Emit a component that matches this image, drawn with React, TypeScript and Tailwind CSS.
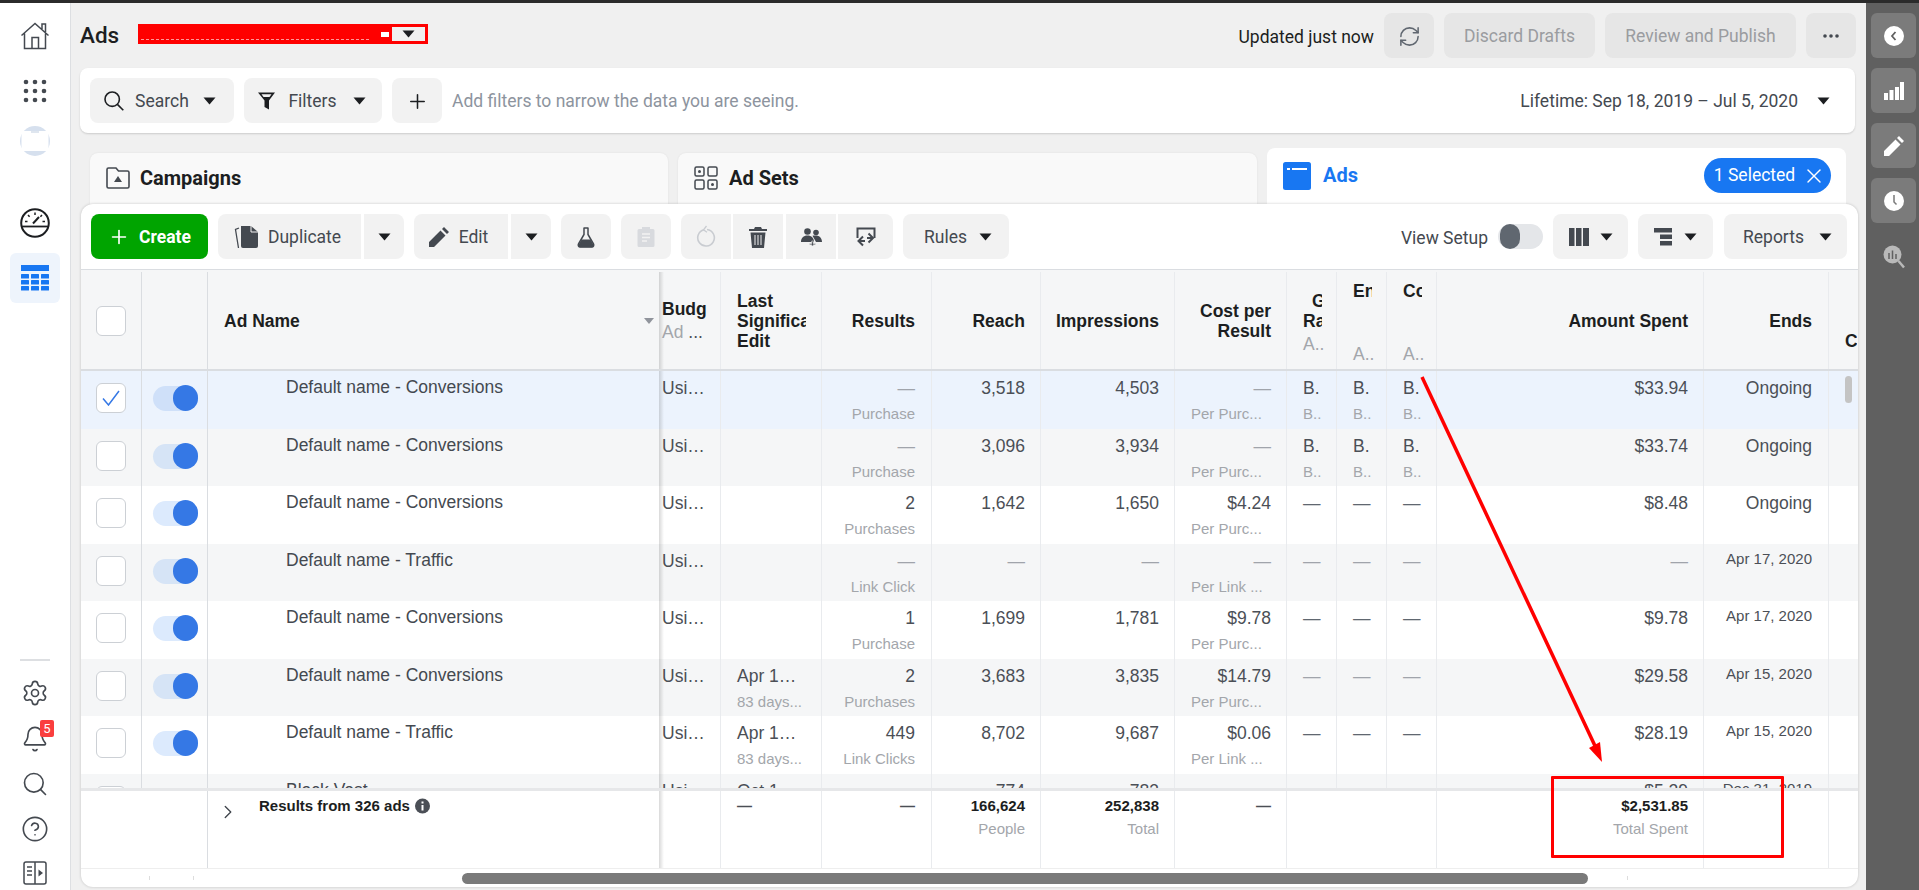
import { ReactNode } from "react";
import { Search, Plus, Settings, Bell, CircleHelp, X, RefreshCw, ChevronRight } from "lucide-react";

const Caret = ({ className = "" }: { className?: string }) => (
  <svg width="13" height="8" viewBox="0 0 13 8" className={className}>
    <path d="M0.5 0.5h12L6.5 7.5z" fill="#1c1e21" />
  </svg>
);

const HomeIcon = () => (
  <svg width="30" height="30" viewBox="0 0 30 30" fill="none" stroke="#444950" strokeWidth="1.5">
    <path d="M1.5 14.5 15 2.5l13.5 12M4.5 12.5V27.5h21V12.5M22 8V3h3.5v8M12 27.5v-11h6.5v11" />
  </svg>
);

const DotsIcon = () => (
  <svg width="24" height="24" viewBox="0 0 24 24" fill="#444950">
    {[3, 12, 21].map((y) =>
      [3, 12, 21].map((x) => <circle key={`${x}-${y}`} cx={x} cy={y} r="2.3" />)
    )}
  </svg>
);

const AccountIcon = () => (
  <svg width="30" height="30" viewBox="0 0 30 30">
    <circle cx="15" cy="15" r="15" fill="#d6e0ee" />
    <rect x="1.5" y="5" width="27" height="20" rx="2" fill="#ffffff" />
    <rect x="11" y="5" width="8" height="2" fill="#dfe6ef" />
  </svg>
);

const GaugeIcon = () => (
  <svg width="30" height="30" viewBox="0 0 30 30" fill="none" stroke="#1c1e21">
    <circle cx="15" cy="15" r="13.8" strokeWidth="2" />
    <path d="M2 18.5h26" strokeWidth="1.8" />
    <path d="M13 15.5 19 9" strokeWidth="2" />
    <path d="M15 4.5v2.5M8 7l1.6 1.8M22 7l-1.6 1.8M5 13.5h2.5M25 13.5h-2.5" strokeWidth="1.5" />
  </svg>
);

const TableIcon = () => (
  <svg width="28" height="26" viewBox="0 0 28 26" fill="#1877f2">
    <rect x="0" y="0" width="28" height="6" />
    {[9, 15, 21].map((y) =>
      [0, 10, 20].map((x) => <rect key={`${x}-${y}`} x={x} y={y} width="8" height="4.5" rx="0.5" />)
    )}
  </svg>
);

const PanelIcon = () => (
  <svg width="24" height="24" viewBox="0 0 24 24" fill="none" stroke="#444950" strokeWidth="1.5">
    <rect x="1" y="1" width="22" height="22" rx="2" />
    <path d="M12 1v22M4 6h5M4 10h5M4 14h5" />
    <path d="M15.5 8.5 20 12l-4.5 3.5z" fill="#444950" stroke="none" />
  </svg>
);

const SearchGlass = () => (
  <svg width="20" height="20" viewBox="0 0 20 20" fill="none" stroke="#1c1e21" strokeWidth="1.6">
    <circle cx="8.200" cy="8.200" r="7.200" />
    <path d="M13.400 13.400 19.300 19.300" />
  </svg>
);

const FunnelIcon = () => (
  <svg width="17" height="18" viewBox="0 0 17 18">
    <path d="M0 0.500h17L11 8.500V17.500l-4.500-2.500V8.500z" fill="#1c1e21" />
    <path d="M3.500 2.200h10L11.500 5H5.500z" fill="#f2f2f2" />
  </svg>
);

const DuplicateIcon = () => (
  <svg width="25" height="24" viewBox="0 0 25 24" fill="none">
    <path d="M5 3 1.5 4.5 4.5 23" stroke="#444950" strokeWidth="1.3" />
    <path d="M7 1h10l7 6v14a2 2 0 0 1-2 2H9a2 2 0 0 1-2-2z" fill="#444950" />
    <path d="M17 1v6h7" fill="none" stroke="#f2f2f2" strokeWidth="1" />
  </svg>
);

const PencilIcon = ({ color = "#444950" }: { color?: string }) => (
  <svg width="20" height="20" viewBox="0 0 20 20" fill={color}>
    <path d="M0 20v-5L11.5 3.5l5 5L5 20zM13 2l2-2 5 5-2 2z" />
  </svg>
);

const FlaskIcon = () => (
  <svg width="18" height="21" viewBox="0 0 18 21" fill="none">
    <path d="M6.5 1h5M7 1v6.5L1.5 17a2 2 0 0 0 1.8 3h11.4a2 2 0 0 0 1.8-3L11 7.5V1" stroke="#444950" strokeWidth="1.5" />
    <path d="M4.500 12.500h9l3 5.500a1.500 1.500 0 0 1-1.300 2.200H2.800A1.500 1.500 0 0 1 1.500 18z" fill="#444950" />
  </svg>
);

const ClipboardIcon = () => (
  <svg width="18" height="22" viewBox="0 0 18 22" fill="#d8dade">
    <path d="M2 3h3V1h8v2h3a1.500 1.500 0 0 1 1.500 1.500v15A1.500 1.500 0 0 1 16 21H2a1.500 1.500 0 0 1-1.500-1.500v-15A1.500 1.500 0 0 1 2 3z" />
    <path d="M5 8h8M5 11.500h8M5 15h5" stroke="#f2f2f2" strokeWidth="1.300" />
  </svg>
);

const RedoIcon = () => (
  <svg width="20" height="24" viewBox="0 0 20 24" fill="none" stroke="#c9ccd1" strokeWidth="1.600">
    <path d="M11 4.500a8.300 8.300 0 1 1-3 .2" />
    <path d="M10.500 1 7.500 4.800l3.500 2.400" strokeWidth="1.300" />
  </svg>
);

const TrashIcon = () => (
  <svg width="18" height="21" viewBox="0 0 18 21" fill="#444950">
    <path d="M6 0h6l1 2h5v2H0V2h5zM1.500 5.500h15L15 21H3z" />
    <path d="M6 8v10M9 8v10M12 8v10" stroke="#f2f2f2" strokeWidth="1" />
  </svg>
);

const PeopleIcon = () => (
  <svg width="21" height="18" viewBox="0 0 21 18" fill="#444950">
    <circle cx="6.500" cy="3.500" r="3.300" />
    <circle cx="15" cy="4.500" r="2.800" />
    <path d="M0 14c0-4 2.500-6.500 6.500-6.500S13 10 13 14zM11.500 7.800C13 7.300 17 7 19 9c1.500 1.500 2 3.500 2 5h-6z" />
    <path d="M8.500 15.500h2.200v-2.500h1.600v2.500h2.200v1.300h-2.200V18h-1.600v-1.200H8.500z" stroke="#f2f2f2" strokeWidth="0.600" />
  </svg>
);

const ShareIcon = () => (
  <svg width="20" height="20" viewBox="0 0 20 20" fill="none" stroke="#444950" strokeWidth="2">
    <path d="M1.500 11V1.500h17V11" />
    <path d="M7 9.500 2.500 14 7 18.500M3 14h6M12.500 6.500 17 11l-4.500 4.500M11 11h5.500" />
  </svg>
);

const ColumnsIcon = () => (
  <svg width="20" height="20" viewBox="0 0 20 20" fill="#444950">
    <rect x="0" y="1" width="5.500" height="18" />
    <rect x="7" y="1" width="5.500" height="18" />
    <rect x="14" y="1" width="6" height="18" />
  </svg>
);

const BreakdownIcon = () => (
  <svg width="18" height="18" viewBox="0 0 18 18" fill="#444950">
    <rect x="0" y="0" width="18" height="4.500" />
    <rect x="6" y="6.500" width="12" height="4.500" />
    <rect x="6" y="13" width="12" height="4.500" />
  </svg>
);

const CampaignIcon = () => (
  <svg width="24" height="22" viewBox="0 0 24 22" fill="none" stroke="#444950" strokeWidth="1.600">
    <path d="M1 2.500A1.500 1.500 0 0 1 2.500 1H10l2.500 3h9A1.500 1.500 0 0 1 23 5.500v14a1.500 1.500 0 0 1-1.500 1.500h-19A1.500 1.500 0 0 1 1 19.500z" />
    <path d="M12 9l4 6H8z" fill="#444950" stroke="none" />
  </svg>
);

const AdSetIcon = () => (
  <svg width="24" height="24" viewBox="0 0 24 24" fill="none" stroke="#444950" strokeWidth="1.500">
    {[
      [1, 1],
      [14, 1],
      [1, 14],
      [14, 14],
    ].map(([x, y]) => (
      <g key={`${x}-${y}`}>
        <rect x={x} y={y} width="9" height="9" rx="1.500" />
      </g>
    ))}
    <circle cx="5.500" cy="5.500" r="1.500" fill="#444950" stroke="none" />
    <circle cx="18.500" cy="18.500" r="1.500" fill="#444950" stroke="none" />
  </svg>
);

const AdTabIcon = () => (
  <svg width="28" height="28" viewBox="0 0 28 28">
    <rect width="28" height="28" rx="2.500" fill="#1877f2" />
    <rect x="4" y="6" width="3" height="2" fill="#ffffff" />
    <rect x="9" y="6" width="15" height="2" fill="#ffffff" />
  </svg>
);

const BackIcon = () => (
  <svg width="20" height="20" viewBox="0 0 20 20">
    <circle cx="10" cy="10" r="10" fill="#ffffff" />
    <path d="M11.500 6 8 10l3.500 4" fill="none" stroke="#606060" strokeWidth="1.800" />
  </svg>
);

const BarsIcon = () => (
  <svg width="20" height="18" viewBox="0 0 20 18" fill="#ffffff">
    <rect x="0" y="11" width="4" height="7" />
    <rect x="5.500" y="8" width="4" height="10" />
    <rect x="11" y="5" width="4" height="13" />
    <rect x="16" y="0" width="4" height="18" />
  </svg>
);

const ClockIcon = () => (
  <svg width="20" height="20" viewBox="0 0 20 20">
    <circle cx="10" cy="10" r="10" fill="#ffffff" />
    <path d="M10 4v7l2.500 2.500" fill="none" stroke="#7a7a7a" strokeWidth="1.500" />
  </svg>
);

const InsightIcon = () => (
  <svg width="22" height="24" viewBox="0 0 22 24" fill="none">
    <circle cx="9.500" cy="9.500" r="9" fill="#b9b9b9" />
    <path d="M15.500 16 21 22.500" stroke="#b9b9b9" strokeWidth="2.500" />
    <path d="M6 8v6M9.500 5.500V14M13 9v5" stroke="#606060" strokeWidth="1.500" />
  </svg>
);

const Btn = ({
  className = "",
  bg = "bg-[#f2f2f2]",
  children,
}: {
  className?: string;
  bg?: string;
  children: ReactNode;
}) => (
  <div className={`flex h-[45px] shrink-0 items-center justify-center rounded-lg pt-px ${bg} ${className}`}>
    {children}
  </div>
);

const RailBtn = ({ children }: { children: ReactNode }) => (
  <div className="flex h-[45px] w-[45px] items-center justify-center rounded-md bg-[#7b7b7b]">{children}</div>
);

const Box = ({ checked = false }: { checked?: boolean }) => (
  <div className="flex h-[30px] w-[30px] items-center justify-center rounded-md border border-[#ccd0d5] bg-white">
    {checked && (
      <svg width="18" height="16" viewBox="0 0 18 16" fill="none" stroke="#3578e5" strokeWidth="1.500">
        <path d="M1 8.500 6.500 15 17 1" />
      </svg>
    )}
  </div>
);

const COLS =
  "grid grid-cols-[61px_66px_451px_62px_101px_110px_109px_134px_112px_50px_50px_50px_267px_125px_28px]";

const LINE = "border-r border-[#e9ebee]";
const FIRST = "border-r border-[#dadde1]";
const SHADOW = "bg-linear-to-r from-black/15 to-transparent bg-[length:5px_100%] bg-no-repeat";

type Row = {
  name: string;
  edit?: [string, string?];
  results: [string, string?];
  reach: string;
  impressions: string;
  cost: [string, string?];
  blocks?: boolean;
  spent: string;
  ends: string;
};

const CONV = "Default name - Conversions";
const TRAF = "Default name - Traffic";

const rows: Row[] = [
  { name: CONV, results: ["—", "Purchase"], reach: "3,518", impressions: "4,503", cost: ["—", "Per Purc..."], blocks: true, spent: "$33.94", ends: "Ongoing" },
  { name: CONV, results: ["—", "Purchase"], reach: "3,096", impressions: "3,934", cost: ["—", "Per Purc..."], blocks: true, spent: "$33.74", ends: "Ongoing" },
  { name: CONV, results: ["2", "Purchases"], reach: "1,642", impressions: "1,650", cost: ["$4.24", "Per Purc..."], spent: "$8.48", ends: "Ongoing" },
  { name: TRAF, results: ["—", "Link Click"], reach: "—", impressions: "—", cost: ["—", "Per Link ..."], spent: "—", ends: "Apr 17, 2020" },
  { name: CONV, results: ["1", "Purchase"], reach: "1,699", impressions: "1,781", cost: ["$9.78", "Per Purc..."], spent: "$9.78", ends: "Apr 17, 2020" },
  { name: CONV, edit: ["Apr 1…", "83 days..."], results: ["2", "Purchases"], reach: "3,683", impressions: "3,835", cost: ["$14.79", "Per Purc..."], spent: "$29.58", ends: "Apr 15, 2020" },
  { name: TRAF, edit: ["Apr 1…", "83 days..."], results: ["449", "Link Clicks"], reach: "8,702", impressions: "9,687", cost: ["$0.06", "Per Link ..."], spent: "$28.19", ends: "Apr 15, 2020" },
  { name: "Black Vest", edit: ["Oct 1…"], results: [""], reach: "774", impressions: "783", cost: [""], spent: "$5.29", ends: "Dec 31, 2019" },
];

const Value = ({ text, dim }: { text: string; dim: boolean }) => {
  const color = text !== "—" ? "text-[#4b4f56]" : dim ? "text-[#a0a4ab]" : "text-[#606770]";
  return <div className={`h-5 leading-5 whitespace-nowrap ${color}`}>{text}</div>;
};

const Sub = ({ text }: { text?: string }) =>
  text ? <div className="mt-[6px] h-5 text-[15px] leading-5 whitespace-nowrap text-[#a3a6ab]">{text}</div> : null;

const Short = ({ row, dim }: { row: Row; dim: boolean }) => (
  <div className={`${LINE} overflow-hidden pt-[7px] pl-4`}>
    {row.blocks ? (
      <>
        <Value text="B." dim={dim} />
        <Sub text="B.." />
      </>
    ) : (
      <Value text={row.name === "Black Vest" ? "" : "—"} dim={dim} />
    )}
  </div>
);

const DataRow = ({ row, index }: { row: Row; index: number }) => {
  const bg = index === 0 ? "bg-[#ecf3fd]" : index % 2 === 1 ? "bg-[#f5f6f7]" : "bg-white";
  const track = index === 0 ? "bg-[#cfe0f9]" : index % 2 === 1 ? "bg-[#d6e4f6]" : "bg-[#dceafd]";
  const dim = index % 2 === 1 || index === 0;
  return (
    <div className={`${COLS} h-[57.5px] shrink-0 text-[17.5px] ${bg}`}>
      <div className={`${FIRST} flex justify-center pt-3`}>
        <Box checked={index === 0} />
      </div>
      <div className={`${FIRST} pt-[15px] pl-[11px]`}>
        <div className={`relative h-[25px] w-[45px] rounded-full ${track}`}>
          <div className="absolute top-[-1px] right-0 h-[26px] w-[25px] rounded-full bg-[#3578e5]" />
        </div>
      </div>
      <div className="pt-[6px] pl-[78px] leading-5 whitespace-nowrap text-[#444950]">{row.name}</div>
      <div className={`${LINE} ${SHADOW} overflow-hidden pt-[7px] pl-[3px]`}>
        <Value text="Usi…" dim={false} />
      </div>
      <div className={`${LINE} overflow-hidden pt-[7px] pl-4`}>
        {row.edit && (
          <>
            <Value text={row.edit[0]} dim={false} />
            <Sub text={row.edit[1]} />
          </>
        )}
      </div>
      <div className={`${LINE} pt-[7px] pr-4 text-right`}>
        <Value text={row.results[0]} dim={dim} />
        <Sub text={row.results[1]} />
      </div>
      <div className={`${LINE} pt-[7px] pr-[15px] text-right`}>
        <Value text={row.reach} dim={dim} />
      </div>
      <div className={`${LINE} pt-[7px] pr-[15px] text-right`}>
        <Value text={row.impressions} dim={dim} />
      </div>
      <div className={`${LINE} pt-[7px] pr-[15px] text-right`}>
        <Value text={row.cost[0]} dim={dim} />
        {row.cost[1] && <div className="mt-[6px] h-5 pl-4 text-left text-[15px] leading-5 whitespace-nowrap text-[#a3a6ab]">{row.cost[1]}</div>}
      </div>
      <Short row={row} dim={dim} />
      <Short row={row} dim={dim} />
      <Short row={row} dim={dim} />
      <div className={`${LINE} pt-[7px] pr-[15px] text-right`}>
        <Value text={row.spent} dim={dim} />
      </div>
      <div className={`${LINE} pr-4 text-right`}>
        {row.ends === "Ongoing" ? (
          <div className="pt-[7px]">
            <Value text={row.ends} dim={false} />
          </div>
        ) : (
          <div className="pt-[5px] text-[15px] leading-5 whitespace-nowrap text-[#4b4f56]">{row.ends}</div>
        )}
      </div>
      <div />
    </div>
  );
};

const Th = ({ className = "", children }: { className?: string; children?: ReactNode }) => (
  <div className={`${LINE} flex flex-col justify-center overflow-hidden ${className}`}>{children}</div>
);

const HeaderRow = () => (
  <div className={`${COLS} h-[101px] shrink-0 border-b-2 border-[#dadde1] bg-[#f5f6f7] pt-[2px] text-[17.5px] leading-5 font-bold text-[#1c1e21]`}>
    <div className={`${FIRST} flex items-center justify-center`}>
      <Box />
    </div>
    <div className={FIRST} />
    <div className="flex items-center justify-between pr-[5px] pl-4">
      <span>Ad Name</span>
      <svg width="10" height="6" viewBox="0 0 10 6">
        <path d="M0 0h10L5 6z" fill="#90949c" />
      </svg>
    </div>
    <Th className={`${SHADOW} pl-[3px]`}>
      <div className="whitespace-nowrap">Budg</div>
      <div className="mt-[3px] font-normal whitespace-nowrap text-[#a3a6ab]">
        Ad <span className="text-[#4b4f56]">...</span>
      </div>
    </Th>
    <Th className="pr-[15px] pl-4">
      <div className="overflow-hidden whitespace-nowrap">Last</div>
      <div className="overflow-hidden whitespace-nowrap">Significant</div>
      <div className="overflow-hidden whitespace-nowrap">Edit</div>
    </Th>
    <Th className="pr-4 text-right">Results</Th>
    <Th className="pr-[15px] text-right">Reach</Th>
    <Th className="pr-[15px] text-right">Impressions</Th>
    <Th className="pr-[15px] text-right">
      <div>Cost per</div>
      <div>Result</div>
    </Th>
    <div className={`${LINE} overflow-hidden pt-[19px] pl-4`}>
      <div className="ml-[9px] w-[10px] overflow-hidden">G</div>
      <div className="w-[19px] overflow-hidden whitespace-nowrap">Ra</div>
      <div className="mt-[3px] font-normal whitespace-nowrap text-[#a3a6ab]">A..</div>
    </div>
    <div className={`${LINE} overflow-hidden pt-[9px] pl-4`}>
      <div className="w-[19px] overflow-hidden whitespace-nowrap">En</div>
      <div className="mt-[43px] font-normal whitespace-nowrap text-[#a3a6ab]">A..</div>
    </div>
    <div className={`${LINE} overflow-hidden pt-[9px] pl-4`}>
      <div className="w-[19px] overflow-hidden whitespace-nowrap">Co</div>
      <div className="mt-[43px] font-normal whitespace-nowrap text-[#a3a6ab]">A..</div>
    </div>
    <Th className="pr-[15px] text-right">Amount Spent</Th>
    <Th className="pr-4 text-right">Ends</Th>
    <div className="overflow-hidden pt-[59px] pl-[16px]">C</div>
  </div>
);

const Total = ({ value, label }: { value: string; label: string }) => (
  <div className={`${LINE} pt-[5px] pr-[15px] text-right text-[15px] leading-5`}>
    <div className="font-bold text-[#1c1e21]">{value}</div>
    <div className="mt-[3px] text-[#a3a6ab]">{label}</div>
  </div>
);

const FooterRow = () => (
  <div className={`${COLS} h-[80px] shrink-0 border-t-[3px] border-[#e6e7e9] bg-white`}>
    <div />
    <div className={FIRST} />
    <div className="flex items-start pt-[10px] pl-[9px]">
      <ChevronRight size={22} strokeWidth={1.5} color="#444950" />
      <div className="mt-[-5px] ml-[20px] flex items-center gap-[5px] text-[15px] leading-5 font-bold text-[#1c1e21]">
        Results from 326 ads
        <svg width="15" height="16" viewBox="0 0 15 16">
          <circle cx="7.500" cy="8" r="7.500" fill="#4b4f56" />
          <rect x="6.500" y="7" width="2" height="5.500" fill="#ffffff" />
          <rect x="6.500" y="3.500" width="2" height="2" fill="#ffffff" />
        </svg>
      </div>
    </div>
    <div className={`${LINE} ${SHADOW}`} />
    <div className={`${LINE} pt-[5px] pl-4 text-[15px] leading-5 font-bold text-[#4b4f56]`}>—</div>
    <div className={`${LINE} pt-[5px] pr-4 text-right text-[15px] leading-5 font-bold text-[#4b4f56]`}>—</div>
    <Total value="166,624" label="People" />
    <Total value="252,838" label="Total" />
    <div className={`${LINE} pt-[5px] pr-[15px] text-right text-[15px] leading-5 font-bold text-[#4b4f56]`}>—</div>
    <div />
    <div />
    <div className={LINE} />
    <div className={`${LINE} pt-[5px] pr-[15px] text-right text-[15px] leading-5`}>
      <div className="font-bold text-[#1c1e21]">$2,531.85</div>
      <div className="mt-[3px] text-[#a3a6ab]">Total Spent</div>
    </div>
    <div className={LINE} />
    <div />
  </div>
);

const GREY = "bg-[#e6e6e6]";

const App = () => {
  return (
    <div className="relative flex h-[890px] w-[1919px] flex-col overflow-hidden bg-[#f0f0f0] [font-family:Roboto,sans-serif] text-[17.5px] text-[#1c1e21]">
      <div className="h-[3px] shrink-0 bg-[#2b2b2b]" />
      <div className="flex min-h-0 flex-1">
        {/* left nav */}
        <aside className="flex w-[71px] shrink-0 flex-col items-center border-r border-[#dddfe2] bg-white">
          <div className="mt-[18px]">
            <HomeIcon />
          </div>
          <div className="mt-[28px]">
            <DotsIcon />
          </div>
          <div className="mt-[23px]">
            <AccountIcon />
          </div>
          <div className="mt-[52px]">
            <GaugeIcon />
          </div>
          <div className="mt-[15px] flex h-[50px] w-[50px] items-center justify-center rounded-md bg-[#eef4fc]">
            <TableIcon />
          </div>
          <div className="mt-auto h-[2px] w-[30px] bg-[#dddfe2]" />
          <div className="mt-[18px]">
            <Settings size={28} strokeWidth={1.4} color="#444950" />
          </div>
          <div className="relative mt-[18px]">
            <Bell size={28} strokeWidth={1.4} color="#444950" />
            <div className="absolute top-[-5px] right-[-5px] flex h-[17px] w-[14px] items-center justify-center rounded-[2px] bg-[#fa3e3e] text-[13px] text-white">
              5
            </div>
          </div>
          <div className="mt-[17px]">
            <Search size={28} strokeWidth={1.4} color="#444950" />
          </div>
          <div className="mt-[17px]">
            <CircleHelp size={28} strokeWidth={1.4} color="#444950" />
          </div>
          <div className="mt-[18px] mb-[5px]">
            <PanelIcon />
          </div>
        </aside>

        <main className="flex min-w-0 flex-1 flex-col">
          {/* page title */}
          <div className="flex h-[65px] shrink-0 items-start pt-[10px] pr-[10px] pl-[9px]">
            <div className="mt-[9px] text-[22.5px] leading-[26px] font-medium">Ads</div>
            <div className="mt-[11px] ml-[19px] flex h-[20px] w-[290px] items-center border-[3px] border-[#ff0000] bg-[#ff0000]">
              <div className="mb-[1px] flex-1 self-end border-b border-dashed border-white/60" />
              <div className="ml-[12px] h-[5px] w-[8px] bg-white" />
              <div className="ml-[3px] flex h-full w-[33px] items-center justify-center bg-[#f0f0f0]">
                <Caret />
              </div>
            </div>
            <div className="mt-[11px] ml-auto whitespace-nowrap">Updated just now</div>
            <Btn bg={GREY} className="ml-[10px] w-[50px]">
              <RefreshCw size={23} strokeWidth={1.6} color="#606770" />
            </Btn>
            <Btn bg={GREY} className="ml-[10px] w-[151px] text-[#9a9ca0]">
              Discard Drafts
            </Btn>
            <Btn bg={GREY} className="ml-[10px] w-[191px] text-[#9a9ca0]">
              Review and Publish
            </Btn>
            <Btn bg={GREY} className="ml-[10px] w-[50px]">
              <svg width="16" height="4" viewBox="0 0 16 4" fill="#444950">
                <circle cx="2" cy="2" r="1.800" />
                <circle cx="8" cy="2" r="1.800" />
                <circle cx="14" cy="2" r="1.800" />
              </svg>
            </Btn>
          </div>

          {/* filter bar */}
          <div className="mr-[11px] ml-[9px] flex h-[65px] shrink-0 items-center rounded-lg bg-white pr-[25px] pl-[10px] shadow-[0_1px_2px_rgba(0,0,0,0.15)]">
            <Btn className="w-[144px] pr-[4px]">
              <SearchGlass />
              <span className="ml-[11px] text-[#444950]">Search</span>
              <Caret className="ml-[14px]" />
            </Btn>
            <Btn className="ml-[10px] w-[138px] pr-[2px]">
              <FunnelIcon />
              <span className="ml-[13px] text-[#444950]">Filters</span>
              <Caret className="ml-[16px]" />
            </Btn>
            <Btn className="ml-[10px] w-[50px]">
              <Plus size={23} strokeWidth={1.6} color="#1c1e21" />
            </Btn>
            <div className="ml-[10px] pt-px whitespace-nowrap text-[#8d949e]">Add filters to narrow the data you are seeing.</div>
            <div className="ml-auto pt-px whitespace-nowrap text-[#444950]">Lifetime: Sep 18, 2019 – Jul 5, 2020</div>
            <Caret className="ml-[19px]" />
          </div>

          {/* level tabs */}
          <div className="flex h-[71px] shrink-0 items-end gap-[10px] pl-[19px]">
            <div className="flex h-[51px] w-[578px] items-start gap-[10px] rounded-t-lg bg-[#f9f9f9] pt-[14px] pl-[16px] shadow-[0_0_2px_rgba(0,0,0,0.08)]">
              <CampaignIcon />
              <span className="text-[20px] leading-[22px] font-bold">Campaigns</span>
            </div>
            <div className="flex h-[51px] w-[579px] items-start gap-[11px] rounded-t-lg bg-[#f9f9f9] pt-[13px] pl-[16px] shadow-[0_0_2px_rgba(0,0,0,0.08)]">
              <AdSetIcon />
              <span className="text-[20px] leading-[24px] font-bold">Ad Sets</span>
            </div>
            <div className="flex h-[56px] w-[579px] items-start rounded-t-lg bg-white pt-[10px] pl-[16px]">
              <div className="mt-[4px]">
                <AdTabIcon />
              </div>
              <span className="mt-[6px] ml-[12px] text-[20px] leading-[22px] font-bold text-[#1877f2]">Ads</span>
              <div className="mr-[15px] ml-auto flex h-[35px] w-[127px] items-center justify-center gap-[7px] rounded-full bg-[#1877f2] pl-[5px] text-white">
                1 Selected
                <X size={24} strokeWidth={1.4} color="#ffffff" />
              </div>
            </div>
          </div>

          {/* table card */}
          <div className="relative z-10 ml-[10px] flex h-[683px] w-[1777px] shrink-0 flex-col overflow-hidden rounded-xl bg-white shadow-[0_0_3px_rgba(0,0,0,0.2)]">
            <div className="flex h-[66px] shrink-0 items-start border-b border-[#dadde1] pt-[10px] pr-[11px] pl-[10px]">
              <Btn bg="bg-[#00a400]" className="w-[117px] gap-[9px] font-bold text-white">
                <Plus size={22} strokeWidth={1.8} color="#ffffff" />
                Create
              </Btn>
              <Btn className="ml-[10px] w-[143px] gap-[9px] rounded-r-none pr-[4px] text-[#444950]">
                <DuplicateIcon />
                Duplicate
              </Btn>
              <Btn className="ml-[3px] w-[40px] rounded-l-none">
                <Caret />
              </Btn>
              <Btn className="ml-[10px] w-[94px] gap-[10px] rounded-r-none pr-[5px] text-[#444950]">
                <PencilIcon />
                Edit
              </Btn>
              <Btn className="ml-[3px] w-[40px] rounded-l-none">
                <Caret />
              </Btn>
              <Btn className="ml-[10px] w-[50px]">
                <FlaskIcon />
              </Btn>
              <Btn className="ml-[10px] w-[50px]">
                <ClipboardIcon />
              </Btn>
              <Btn className="ml-[10px] w-[50px] rounded-r-none">
                <RedoIcon />
              </Btn>
              <Btn className="ml-[2px] w-[50px] rounded-none">
                <TrashIcon />
              </Btn>
              <Btn className="ml-[3px] w-[50px] rounded-none">
                <PeopleIcon />
              </Btn>
              <Btn className="ml-[2px] w-[55px] rounded-l-none">
                <ShareIcon />
              </Btn>
              <Btn className="ml-[10px] w-[106px] gap-[12px] pl-[4px] text-[#444950]">
                Rules
                <Caret />
              </Btn>
              <div className="mt-[11px] ml-auto whitespace-nowrap text-[#444950]">View Setup</div>
              <div className="mt-[10px] ml-[10px] h-[25px] w-[45px] rounded-full bg-[#e4e6e9]">
                <div className="ml-[2px] h-[25px] w-[20px] rounded-full bg-[#606770]" />
              </div>
              <Btn className="ml-[10px] w-[75px] gap-[11px]">
                <ColumnsIcon />
                <Caret />
              </Btn>
              <Btn className="ml-[10px] w-[75px] gap-[12px]">
                <BreakdownIcon />
                <Caret />
              </Btn>
              <Btn className="ml-[11px] w-[123px] gap-[15px] pl-[4px] text-[#444950]">
                Reports
                <Caret />
              </Btn>
            </div>

            <div className="flex min-h-0 flex-1 flex-col [font-family:'Liberation_Sans',Arial,sans-serif]">
              <HeaderRow />
              <div className="relative h-[417px] shrink-0 overflow-hidden">
                {rows.map((row, i) => (
                  <DataRow key={i} row={row} index={i} />
                ))}
                <div className="absolute top-[5px] right-[6px] h-[27px] w-[7px] rounded-full bg-[#c4c4c4]" />
              </div>
              <FooterRow />
              <div className="flex h-[19px] shrink-0 items-center border-t border-[#eeeeee]">
                <div className="ml-[68px] h-[4px] w-px bg-[#dddddd]" />
                <div className="ml-[43px] h-[4px] w-px bg-[#dddddd]" />
                <div className="ml-[268px] h-[11px] w-[1126px] rounded-md bg-[#7a7a7a]" />
                <div className="ml-[39px] h-[4px] w-px bg-[#dddddd]" />
              </div>
            </div>
          </div>
        </main>

        {/* right rail */}
        <aside className="flex w-[53px] shrink-0 flex-col items-start gap-[10px] bg-[#606060] pt-[10px] pl-[5px]">
          <RailBtn>
            <BackIcon />
          </RailBtn>
          <RailBtn>
            <BarsIcon />
          </RailBtn>
          <RailBtn>
            <PencilIcon color="#ffffff" />
          </RailBtn>
          <RailBtn>
            <ClockIcon />
          </RailBtn>
          <div className="mt-[12px] ml-[12px]">
            <InsightIcon />
          </div>
        </aside>
      </div>

      {/* annotations drawn on the screenshot */}
      <svg className="pointer-events-none absolute top-0 left-0 z-20" width="1919" height="890" viewBox="0 0 1919 890">
        <path d="M1422 377 1596 748" stroke="#ff0000" strokeWidth="3.500" fill="none" />
        <path d="M1602 762 1589 748 1600 742z" fill="#ff0000" />
      </svg>
      <div className="pointer-events-none absolute top-[776px] left-[1551px] z-20 h-[82px] w-[233px] rounded-[1px] border-[3.5px] border-[#ff0000]" />
    </div>
  );
};

export default App;
